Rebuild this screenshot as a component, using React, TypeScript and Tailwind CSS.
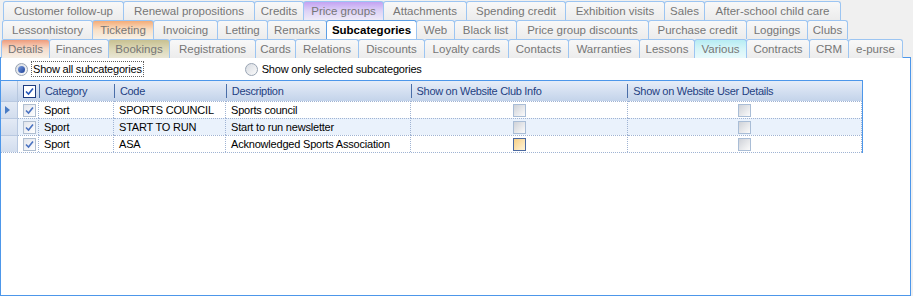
import React from "react";

type Tab = { t: string; w: number; c?: string; sel?: boolean };

const row1: Tab[] = [
  { t: "Customer follow-up", w: 120 },
  { t: "Renewal propositions", w: 131 },
  { t: "Credits", w: 49 },
  { t: "Price groups", w: 80, c: "purple" },
  { t: "Attachments", w: 83 },
  { t: "Spending credit", w: 99 },
  { t: "Exhibition visits", w: 99 },
  { t: "Sales", w: 40 },
  { t: "After-school child care", w: 136 },
];
const row2: Tab[] = [
  { t: "Lessonhistory", w: 90 },
  { t: "Ticketing", w: 61, c: "orange" },
  { t: "Invoicing", w: 64 },
  { t: "Letting", w: 50 },
  { t: "Remarks", w: 59 },
  { t: "Subcategories", w: 90, sel: true },
  { t: "Web", w: 38 },
  { t: "Black list", w: 62 },
  { t: "Price group discounts", w: 132 },
  { t: "Purchase credit", w: 98 },
  { t: "Loggings", w: 61 },
  { t: "Clubs", w: 40 },
];
const row3: Tab[] = [
  { t: "Details", w: 48, c: "salmon" },
  { t: "Finances", w: 59 },
  { t: "Bookings", w: 61, c: "olive" },
  { t: "Registrations", w: 86 },
  { t: "Cards", w: 40 },
  { t: "Relations", w: 63 },
  { t: "Discounts", w: 66 },
  { t: "Loyalty cards", w: 84 },
  { t: "Contacts", w: 60 },
  { t: "Warranties", w: 71 },
  { t: "Lessons", w: 55 },
  { t: "Various", w: 52, c: "cyan" },
  { t: "Contracts", w: 63 },
  { t: "CRM", w: 39 },
  { t: "e-purse", w: 54 },
];

function tabBg(tab: Tab) {
  if (tab.sel) return "bg-white border-[#5c9fe6] text-black font-bold";
  switch (tab.c) {
    case "purple":
      return "bg-gradient-to-b from-[#c3a2f2] via-[#ddd2f6] to-[#eeeaf7] border-[#9cc5f2] text-[#767676]";
    case "orange":
      return "bg-gradient-to-b from-[#f3ac78] via-[#f9e0c6] to-[#f6f1e8] border-[#9cc5f2] text-[#767676]";
    case "salmon":
      return "bg-gradient-to-b from-[#ee9c7c] via-[#f6dccb] to-[#f5efe6] border-[#9cc5f2] text-[#767676]";
    case "olive":
      return "bg-gradient-to-b from-[#c8c192] via-[#dcd8b6] to-[#e9e6d4] border-[#9cc5f2] text-[#767676]";
    case "cyan":
      return "bg-gradient-to-b from-[#b6ecf3] via-[#d6f5f8] to-[#e8f9fb] border-[#9cc5f2] text-[#767676]";
    default:
      return "bg-gradient-to-b from-[#f8f8f8] to-[#ececec] border-[#9cc5f2] text-[#767676]";
  }
}

function TabRow({ tabs, x }: { tabs: Tab[]; x: number }) {
  return (
    <div className="flex h-[19px]" style={{ paddingLeft: x }}>
      {tabs.map((tab, i) => (
        <div
          key={tab.t}
          className={`h-[19px] flex items-center justify-center border border-b-0 rounded-t-[3px] text-[11.5px] leading-none whitespace-nowrap ${
            i > 0 ? "-ml-px" : ""
          } ${tabBg(tab)}`}
          style={{ width: tab.w + 1 }}
        >
          <span className="pt-[1px]">{tab.t}</span>
        </div>
      ))}
    </div>
  );
}

function Check({ header }: { header?: boolean }) {
  return (
    <div
      className={`w-[13px] h-[13px] flex items-center justify-center ${
        header
          ? "border border-[#1c3a7e] bg-white"
          : "border border-[#b0bed0] bg-gradient-to-br from-[#e2e5ec] to-[#ffffff]"
      }`}
    >
      <svg width="9" height="9" viewBox="0 0 9 9">
        <path
          d="M1 4.5 L3.5 7 L8 1.5"
          fill="none"
          stroke={header ? "#2456b8" : "#4a72c0"}
          strokeWidth="1.6"
        />
      </svg>
    </div>
  );
}

function EmptyCheck({ hot }: { hot?: boolean }) {
  return (
    <div
      className={`w-[13px] h-[13px] border ${
        hot
          ? "border-[#4a68a0] bg-gradient-to-br from-[#f6cf84] to-[#fff4d8]"
          : "border-[#a9bdd6] bg-gradient-to-br from-[#cfd2d8] to-[#fbfbfb]"
      }`}
    />
  );
}

function Radio({ on }: { on?: boolean }) {
  return (
    <div className="w-[13px] h-[13px] rounded-full border border-[#9aa5b4] bg-gradient-to-br from-[#d8dce2] to-[#fafafa] flex items-center justify-center">
      {on && (
        <div className="w-[7px] h-[7px] rounded-full bg-gradient-to-br from-[#7a9ce0] to-[#1e3f96]" />
      )}
    </div>
  );
}

const cols = [17, 21, 75, 112, 185, 217, 235];

const rows = [
  { cat: "Sport", code: "SPORTS COUNCIL", desc: "Sports council", hot: false },
  { cat: "Sport", code: "START TO RUN", desc: "Start to run newsletter", hot: false },
  { cat: "Sport", code: "ASA", desc: "Acknowledged Sports Association", hot: true },
];

export default function App() {
  const font = { fontFamily: '"Liberation Sans", Arial, sans-serif' };
  return (
    <div className="w-[913px] h-[296px] bg-[#f0f0f0] overflow-hidden" style={font}>
      <div className="pt-[1px] h-[57px]">
        <TabRow tabs={row1} x={3} />
        <TabRow tabs={row2} x={2} />
        <TabRow tabs={row3} x={1} />
      </div>
      <div className="w-[911px] h-[239px] border border-[#4d97ea] bg-white text-[11px] tracking-[-0.2px] text-black">
        <div className="h-[22px] flex items-center">
          <div className="ml-[14px] flex items-center">
            <Radio on />
            <span className="ml-[3px] px-[1px] border border-dotted border-[#606060] leading-[14px]">
              Show all subcategories
            </span>
          </div>
          <div className="ml-[101px] flex items-center">
            <Radio />
            <span className="ml-[3px] px-[1px] leading-[14px]">
              Show only selected subcategories
            </span>
          </div>
        </div>
        {/* grid */}
        <div className="w-[862px] border-t border-r border-[#4d97ea]">
          {/* header */}
          <div className="flex h-[20px] bg-gradient-to-b from-[#e6edf8] to-[#c3d3ea] text-[#1f3f82] text-[11px] tracking-[-0.3px]">
            <div style={{ width: cols[0] }} className="border-r border-[#b6c7df]" />
            <div style={{ width: cols[1] }} className="flex items-center justify-center pl-[2px]">
              <Check header />
            </div>
            {["Category", "Code", "Description", "Show on Website Club Info", "Show on Website User Details"].map(
              (h, i) => (
                <div key={h} style={{ width: cols[i + 2] }} className="flex items-center">
                  <div className="w-px h-[14px] bg-[#4a6ea8]" />
                  <span className="pl-[5px]">{h}</span>
                </div>
              )
            )}
          </div>
          {rows.map((r, ri) => (
            <div key={r.code} className={`flex h-[17px] ${ri === 1 ? "bg-[#eaf2fc]" : "bg-white"}`}>
              <div
                style={{ width: cols[0] }}
                className="bg-gradient-to-b from-[#e3eaf5] to-[#d2ddee] border-t border-r border-[#b8c8e0] flex items-center justify-center"
              >
                {ri === 0 && (
                  <svg width="6" height="8" viewBox="0 0 6 8" className="ml-[-3px]">
                    <path d="M0 0 L5 4 L0 8 Z" fill="#4a7cc4" />
                  </svg>
                )}
              </div>
              <div
                style={{ width: cols[1] }}
                className="border-t border-r border-dotted border-[#9fb3d3] flex items-center justify-center pl-[2px]"
              >
                <Check />
              </div>
              <div style={{ width: cols[2] }} className="border-t border-r border-dotted border-[#9fb3d3] pl-[5px] flex items-center">
                {r.cat}
              </div>
              <div style={{ width: cols[3] }} className="border-t border-r border-dotted border-[#9fb3d3] pl-[5px] flex items-center">
                {r.code}
              </div>
              <div style={{ width: cols[4] }} className="border-t border-r border-dotted border-[#9fb3d3] pl-[5px] flex items-center">
                {r.desc}
              </div>
              <div style={{ width: cols[5] }} className="border-t border-r border-dotted border-[#9fb3d3] flex items-center justify-center">
                <EmptyCheck hot={r.hot} />
              </div>
              <div style={{ width: cols[6] - 1 }} className="border-t border-r border-dotted border-[#9fb3d3] flex items-center justify-center">
                <EmptyCheck />
              </div>
            </div>
          ))}
          <div className="h-0 border-t border-dotted border-[#9fb3d3]" />
        </div>
      </div>
    </div>
  );
}
